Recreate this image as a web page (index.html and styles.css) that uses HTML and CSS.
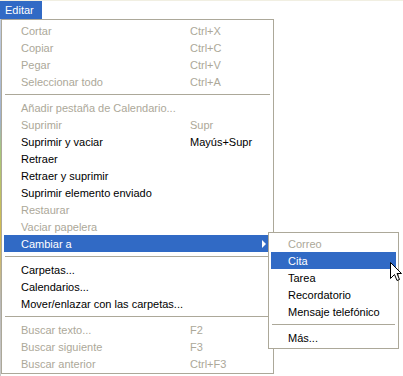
FILE: index.html
```html
<!DOCTYPE html>
<html lang="es">
<head>
    <meta charset="UTF-8">
    <title>Editar</title>
    <link rel="stylesheet" href="styles.css">
</head>
<body>
    <div class="menu-bar">
        <div class="bar-title">Editar</div>
    </div>
    <div class="stage">
        <ul class="menu main-menu">
            <li class="menu-item disabled"><span class="label">Cortar</span><span class="key">Ctrl+X</span></li>
            <li class="menu-item disabled"><span class="label">Copiar</span><span class="key">Ctrl+C</span></li>
            <li class="menu-item disabled"><span class="label">Pegar</span><span class="key">Ctrl+V</span></li>
            <li class="menu-item disabled"><span class="label">Seleccionar todo</span><span class="key">Ctrl+A</span></li>
            <li class="separator"></li>
            <li class="menu-item disabled"><span class="label">Añadir pestaña de Calendario...</span></li>
            <li class="menu-item disabled"><span class="label">Suprimir</span><span class="key">Supr</span></li>
            <li class="menu-item"><span class="label">Suprimir y vaciar</span><span class="key">Mayús+Supr</span></li>
            <li class="menu-item"><span class="label">Retraer</span></li>
            <li class="menu-item"><span class="label">Retraer y suprimir</span></li>
            <li class="menu-item"><span class="label">Suprimir elemento enviado</span></li>
            <li class="menu-item disabled"><span class="label">Restaurar</span></li>
            <li class="menu-item disabled"><span class="label">Vaciar papelera</span></li>
            <li class="menu-item active"><span class="label">Cambiar a</span><span class="arrow"></span></li>
            <li class="separator"></li>
            <li class="menu-item"><span class="label">Carpetas...</span></li>
            <li class="menu-item"><span class="label">Calendarios...</span></li>
            <li class="menu-item"><span class="label">Mover/enlazar con las carpetas...</span></li>
            <li class="separator"></li>
            <li class="menu-item disabled"><span class="label">Buscar texto...</span><span class="key">F2</span></li>
            <li class="menu-item disabled"><span class="label">Buscar siguiente</span><span class="key">F3</span></li>
            <li class="menu-item disabled"><span class="label">Buscar anterior</span><span class="key">Ctrl+F3</span></li>
        </ul>

        <ul class="menu sub-menu">
            <li class="menu-item disabled"><span class="label">Correo</span></li>
            <li class="menu-item active"><span class="label">Cita</span></li>
            <li class="menu-item"><span class="label">Tarea</span></li>
            <li class="menu-item"><span class="label">Recordatorio</span></li>
            <li class="menu-item"><span class="label">Mensaje telefónico</span></li>
            <li class="separator"></li>
            <li class="menu-item"><span class="label">Más...</span></li>
        </ul>

        <!-- mouse pointer over "Cita" -->
        <svg class="pointer" viewBox="0 0 12 20" width="12" height="20">
            <path d="M0.5 0.5 L0.5 16.5 L4.5 12.5 L7 18.5 L9.5 17.5 L7 11.5 L11.5 11.5 Z" fill="#fff" stroke="#000" stroke-width="1" stroke-linejoin="miter"/>
        </svg>
    </div>
</body>
</html>
```

FILE: styles.css
```css
html, body {
    margin: 0;
    padding: 0;
}
body {
    width: 403px;
    height: 376px;
    overflow: hidden;
    font-family: Tahoma, "Liberation Sans", Arial, sans-serif;
    font-size: 11px;
    color: #000;
    background: linear-gradient(to bottom, #c9d3e4 0, #9fb0cc 120px, #a7c77d 150px, #d9b94a 240px, #b8b8b8 300px, #c9c9c9 376px) no-repeat;
    background-size: 1px 100%;
    background-color: #fff;
}
.menu-bar {
    height: 18px;
    border-top: 1px solid #f1efe2;
    background-color: #fff;
    display: flex;
}
.bar-title {
    width: 42px;
    padding-left: 5px;
    box-sizing: border-box;
    background-color: #316ac5;
    color: #fff;
    line-height: 18px;
}
.stage {
    position: relative;
    height: 357px;
}
.menu {
    list-style-type: none;
    margin: 0;
    background-color: #fff;
    border: 1px solid #aca899;
    box-sizing: border-box;
}
.main-menu {
    width: 273px;
    margin-left: 1px;
    padding: 2px 2px 1px 2px;
}
.sub-menu {
    position: absolute;
    left: 268px;
    top: 213px;
    width: 131px;
    padding: 2px;
}
.menu-item {
    display: flex;
    align-items: center;
    height: 17px;
    padding-left: 17px;
    white-space: nowrap;
}
.menu-item.disabled {
    color: #aca899;
}
.menu-item.active {
    background-color: #316ac5;
    color: #fff;
}
.main-menu .label {
    width: 169px;
    flex-shrink: 0;
}
.key {
    flex-grow: 1;
}
.arrow {
    margin-left: auto;
    margin-right: 5px;
    width: 0;
    height: 0;
    border-top: 4px solid transparent;
    border-bottom: 4px solid transparent;
    border-left: 4px solid #fff;
}
.separator {
    height: 9px;
    display: flex;
    align-items: center;
    padding: 0 1px;
}
.separator::before {
    content: "";
    flex-grow: 1;
    height: 1px;
    background-color: #aca899;
}
.pointer {
    position: absolute;
    left: 390px;
    top: 243px;
}
```
